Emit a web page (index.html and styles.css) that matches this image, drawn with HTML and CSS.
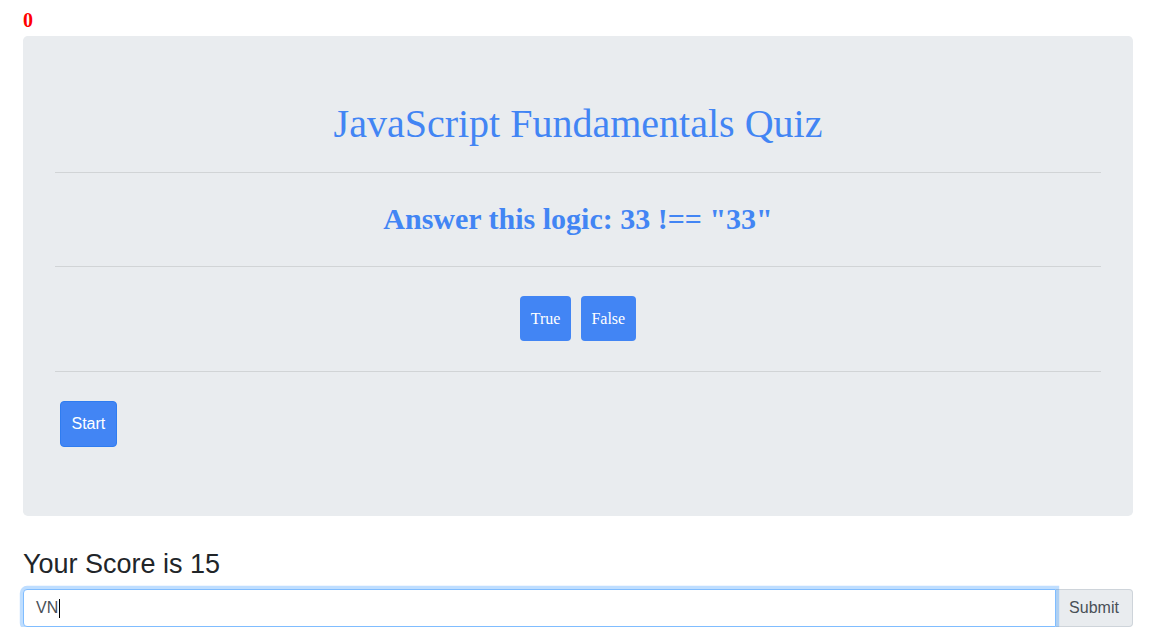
FILE: index.html
```html
<!DOCTYPE html>
<html lang="en">
<head>
<meta charset="utf-8">
<title>JavaScript Fundamentals Quiz</title>
<link rel="stylesheet" href="styles.css">
</head>
<body>
<div class="page">
  <div class="timer">0</div>
  <div class="jumbotron">
    <h1 class="title">JavaScript Fundamentals Quiz</h1>
    <hr class="rule">
    <div class="question">
      <h3 class="question-text">Answer this logic: 33 !== "33"</h3>
    </div>
    <hr class="rule">
    <div class="answers">
      <button class="answer">True</button>
      <button class="answer">False</button>
    </div>
    <hr class="rule">
    <div class="start-row">
      <button class="start">Start</button>
    </div>
  </div>
  <h3 class="score">Your Score is 15</h3>
  <div class="input-group">
    <div class="field"><span class="field-text">VN</span><span class="caret"></span></div>
    <button class="submit">Submit</button>
  </div>
</div>
</body>
</html>
```

FILE: styles.css
```css
* { box-sizing: border-box; }
html, body { margin: 0; padding: 0; background: #fff; }
body {
  font-family: "Liberation Sans", Arial, Helvetica, sans-serif;
  color: #212529;
}
.page {
  width: 1110px;
  margin-left: 23px;
  padding-top: 8px;
}
.timer {
  font-family: "Liberation Serif", "Times New Roman", serif;
  font-weight: bold;
  font-size: 20px;
  line-height: 24px;
  height: 24px;
  color: #ff0000;
  margin-bottom: 4px;
}
.jumbotron {
  background: #e9ecef;
  border-radius: 4.8px;
  padding: 64px 32px 64px;
  margin-bottom: 32px;
}
.title {
  margin: 0 0 24px;
  font-family: "Liberation Serif", "Times New Roman", serif;
  font-weight: normal;
  font-size: 40px;
  line-height: 48px;
  text-align: center;
  color: #4285f4;
}
.rule {
  margin: 0;
  border: 0;
  border-top: 1px solid rgba(0, 0, 0, 0.1);
  height: 0;
}
.question {
  padding: 29px 0 30px;
}
.question-text {
  margin: 0;
  font-family: "Liberation Serif", "Times New Roman", serif;
  font-weight: bold;
  font-size: 30px;
  line-height: 34px;
  text-align: center;
  color: #4285f4;
}
.answers {
  display: flex;
  justify-content: center;
  gap: 10px;
  padding: 29px 0 30px;
}
.answer {
  height: 45px;
  padding: 0 10.5px;
  border: 0;
  border-radius: 4px;
  background: #4285f4;
  color: #fff;
  font-family: "Liberation Serif", "Times New Roman", serif;
  font-size: 16px;
}
.start-row {
  padding: 29px 5px 5px;
}
.start {
  height: 46px;
  padding: 0 10.5px;
  border: 1px solid #2f7cf0;
  border-radius: 4px;
  background: #4285f4;
  color: #fff;
  font-family: "Liberation Sans", Arial, Helvetica, sans-serif;
  font-size: 16px;
}
.score {
  margin: 0 0 8px;
  font-weight: 500;
  font-size: 27px;
  line-height: 33.6px;
  height: 33px;
  color: #212529;
}
.input-group {
  display: flex;
  height: 38px;
}
.field {
  flex: 1;
  display: flex;
  align-items: center;
  padding: 0 12px;
  border: 1px solid #80bdff;
  border-radius: 4px 0 0 4px;
  box-shadow: 0 0 0 3.2px rgba(0, 123, 255, 0.25);
  background: #fff;
  font-size: 16px;
  color: #495057;
  position: relative;
  z-index: 1;
}
.caret {
  display: inline-block;
  width: 1px;
  height: 19px;
  background: #000;
  margin-left: 1px;
}
.submit {
  width: 77px;
  padding: 0;
  border: 1px solid #ced4da;
  border-left: 0;
  border-radius: 0 4px 4px 0;
  background: #e9ecef;
  color: #495057;
  font-family: "Liberation Sans", Arial, Helvetica, sans-serif;
  font-size: 16px;
}
```
